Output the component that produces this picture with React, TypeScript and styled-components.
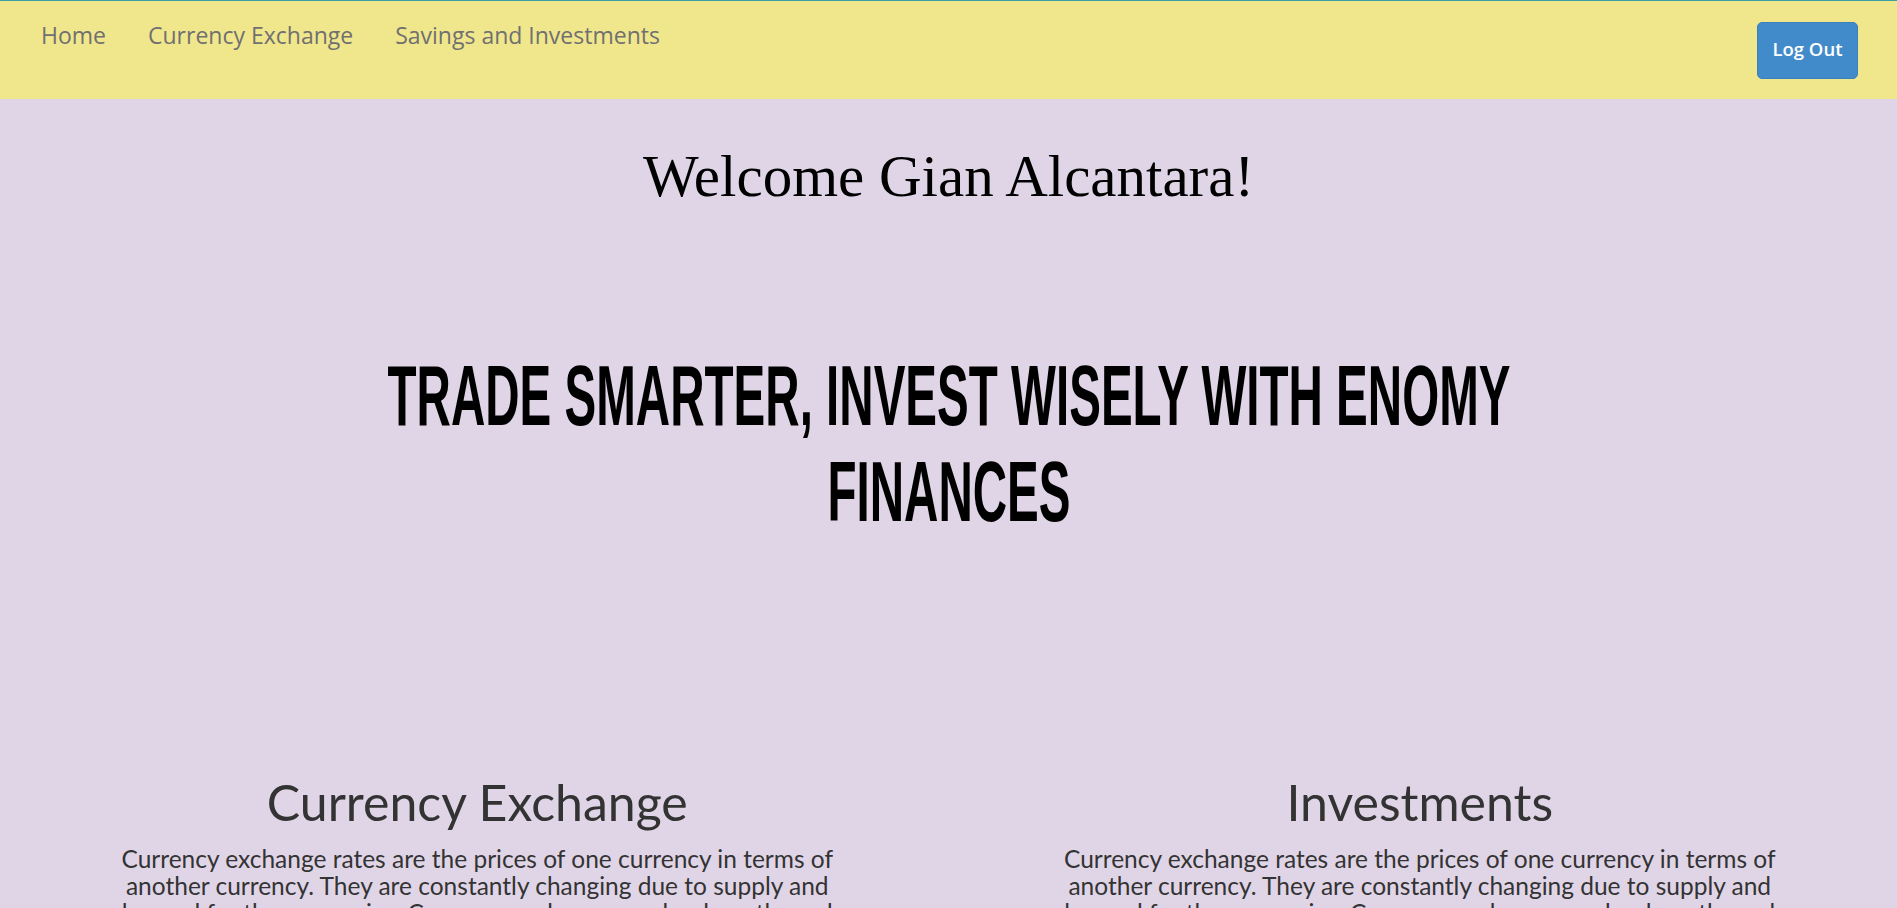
import React from "react";
import styled, { createGlobalStyle } from "styled-components";

const GlobalStyle = createGlobalStyle`
  html, body {
    margin: 0;
    padding: 0;
    background: #e0d5e7;
    overflow-x: hidden;
  }
  * { box-sizing: border-box; }
`;

const Page = styled.div`
  min-height: 908px;
  background: #e0d5e7;
  overflow: hidden;
`;

const NavBar = styled.nav`
  height: 99px;
  background: #f0e68c;
  border-top: 1px solid #3d9ea4;
  display: flex;
  justify-content: space-between;
  align-items: center;
  padding: 0 39px 0 20px;
`;

const NavLinks = styled.ul`
  list-style: none;
  margin: 0;
  padding: 0;
  display: flex;
  align-self: flex-start;
  padding-top: 19px;
`;

const NavLink = styled.a`
  display: block;
  padding: 0 21px;
  font-family: "Open Sans", "Noto Sans", sans-serif;
  font-size: 23px;
  line-height: 30px;
  color: #707070;
  text-decoration: none;
  cursor: pointer;
`;

const LogOutButton = styled.button`
  width: 101px;
  height: 57px;
  margin-top: 0;
  background: #428bca;
  border: 1px solid #3b80bd;
  border-radius: 5px;
  color: #ffffff;
  font-family: "Open Sans", "Noto Sans", sans-serif;
  font-weight: 600;
  font-size: 18.5px;
  padding: 0 0 3px;
  cursor: pointer;
`;

const Welcome = styled.h1`
  margin: 42px 0 0;
  text-align: center;
  font-family: "Liberation Serif", "DejaVu Serif", serif;
  font-weight: 400;
  font-size: 59px;
  line-height: 70px;
  color: #000;
`;

const TaglineWrap = styled.div`
  margin-top: 136px;
  display: flex;
  justify-content: center;
  overflow: hidden;
`;

const Tagline = styled.h2`
  flex: 0 0 auto;
  width: 2140px;
  margin: 0;
  text-align: center;
  font-family: "Liberation Sans", Arial, sans-serif;
  font-weight: 700;
  font-size: 86px;
  line-height: 96px;
  text-transform: uppercase;
  color: #000;
  transform: scaleX(0.553);
  transform-origin: center;
`;

const Sections = styled.section`
  margin-top: 233px;
  display: grid;
  grid-template-columns: 1fr 1fr;
  padding: 0 6px;
`;

const Column = styled.div`
  text-align: center;
`;

const SectionTitle = styled.h3`
  margin: 0 0 13px;
  font-family: Lato, sans-serif;
  font-weight: 400;
  font-size: 50px;
  line-height: 60px;
  color: #333;
`;

const SectionText = styled.p`
  max-width: 755px;
  margin: 0 auto;
  font-family: Lato, sans-serif;
  font-weight: 400;
  font-size: 24.5px;
  line-height: 27px;
  color: #333;
`;

const text =
  "Currency exchange rates are the prices of one currency in terms of another currency. They are constantly changing due to supply and demand for the currencies. Currency exchange can be done through banks, online platforms and exchange offices around the world.";

export default function App() {
  return (
    <Page>
      <GlobalStyle />
      <NavBar>
        <NavLinks>
          <li><NavLink>Home</NavLink></li>
          <li><NavLink>Currency Exchange</NavLink></li>
          <li><NavLink>Savings and Investments</NavLink></li>
        </NavLinks>
        <LogOutButton>Log Out</LogOutButton>
      </NavBar>
      <Welcome>Welcome Gian Alcantara!</Welcome>
      <TaglineWrap>
        <Tagline>Trade smarter, invest wisely with Enomy Finances</Tagline>
      </TaglineWrap>
      <Sections>
        <Column>
          <SectionTitle>Currency Exchange</SectionTitle>
          <SectionText>{text}</SectionText>
        </Column>
        <Column>
          <SectionTitle>Investments</SectionTitle>
          <SectionText>{text}</SectionText>
        </Column>
      </Sections>
    </Page>
  );
}
